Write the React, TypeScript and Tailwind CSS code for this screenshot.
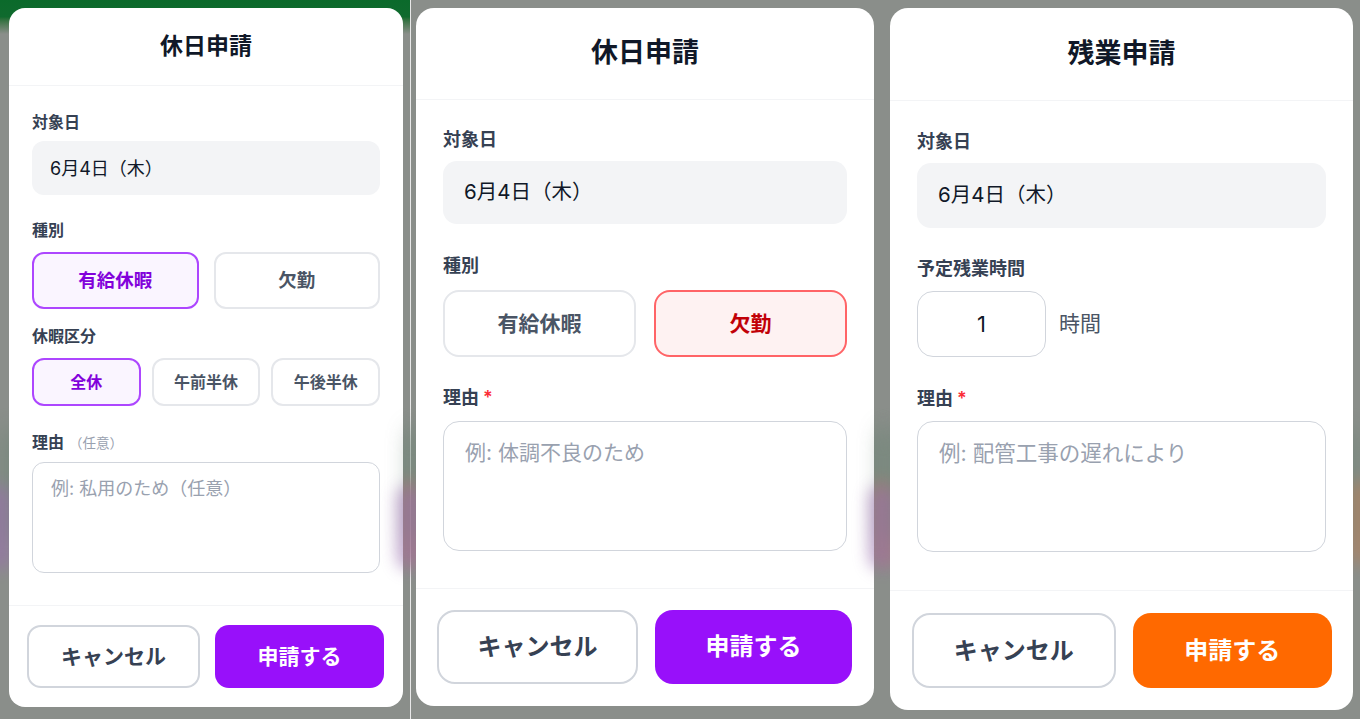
import type { ReactNode } from 'react'

const font = "font-['Inter','Noto_Sans_CJK_JP',sans-serif]"

function Backdrop({ green }: { green?: boolean }) {
  return (
    <>
      {green && (
        <div className="absolute inset-x-0 top-0 h-[34px] bg-gradient-to-b from-[#0b6a2b] via-[#0f6a2e] to-[#8a8e8a]" />
      )}
      <div className="absolute inset-x-0 top-[430px] h-[110px] bg-[#6f8677] blur-md opacity-60" />
      <div className="absolute left-[-14px] top-[485px] h-[85px] w-[26px] rounded-full bg-[#9a6fae] blur-sm opacity-60" />
      <div className="absolute right-[-14px] top-[480px] h-[85px] w-[26px] rounded-full bg-[#b8805a] blur-sm opacity-60" />
    </>
  )
}

function Label({ children, className }: { children: ReactNode; className: string }) {
  return <div className={`font-semibold text-gray-700 ${className}`}>{children}</div>
}

function Star() {
  return <span className="ml-[4px] text-red-500">*</span>
}

export default function App() {
  return (
    <div className={`flex h-[719px] w-[1360px] overflow-hidden bg-[#8a8e8a] ${font}`}>
      {/* panel 1: 休日申請 (有給休暇) */}
      <div className="relative w-[410px] shrink-0 pl-[9px] pr-[7px] pt-[8px]">
        <Backdrop green />
        <div className="relative rounded-[16px] bg-white">
          <div className="flex h-[78px] items-center justify-center border-b border-gray-100">
            <h2 className="text-[23px] font-bold text-gray-900">休日申請</h2>
          </div>
          <div className="px-[23px] pt-[26px] pb-[32px]">
            <Label className="mb-[9px] text-[16px] leading-[20px]">対象日</Label>
            <div className="flex h-[54px] items-center rounded-[12px] bg-gray-100 px-[18px] text-[18px] text-gray-900">
              6月4日（木）
            </div>
            <Label className="mt-[25px] mb-[12px] text-[16px] leading-[20px]">種別</Label>
            <div className="flex gap-[15px]">
              <button className="h-[57px] flex-1 rounded-[12px] border-2 border-purple-500 bg-purple-50 text-[18.5px] font-bold text-purple-700">
                有給休暇
              </button>
              <button className="h-[57px] flex-1 rounded-[12px] border-2 border-gray-200 bg-white text-[18.5px] font-bold text-gray-600">
                欠勤
              </button>
            </div>
            <Label className="mt-[17px] mb-[12px] text-[16px] leading-[20px]">休暇区分</Label>
            <div className="grid grid-cols-3 gap-[11px]">
              <button className="h-[48px] rounded-[12px] border-2 border-purple-500 bg-purple-50 text-[16px] font-bold text-purple-700">
                全休
              </button>
              <button className="h-[48px] rounded-[12px] border-2 border-gray-200 bg-white text-[16px] font-semibold text-gray-600">
                午前半休
              </button>
              <button className="h-[48px] rounded-[12px] border-2 border-gray-200 bg-white text-[16px] font-semibold text-gray-600">
                午後半休
              </button>
            </div>
            <Label className="mt-[26px] mb-[9px] flex items-baseline text-[16px] leading-[20px]">
              理由
              <span className="ml-[5px] text-[13.5px] font-normal text-gray-400">（任意）</span>
            </Label>
            <textarea
              placeholder="例: 私用のため（任意）"
              className="block h-[111px] w-full resize-none rounded-[12px] border border-gray-300 px-[18px] py-[14px] text-[18px] leading-[24px] outline-none placeholder:text-gray-400"
            />
          </div>
          <div className="flex gap-[15px] border-t border-gray-100 pt-[19px] pr-[19px] pb-[19px] pl-[18px]">
            <button className="h-[63px] flex-1 rounded-[14px] border-2 border-gray-300 bg-white text-[21px] font-bold text-gray-700">
              キャンセル
            </button>
            <button className="h-[63px] flex-1 rounded-[14px] bg-purple-600 text-[21px] font-bold text-white">
              申請する
            </button>
          </div>
        </div>
      </div>

      <div className="w-px shrink-0 bg-white/80" />

      {/* panel 2: 休日申請 (欠勤) */}
      <div className="relative w-[472px] shrink-0 pl-[5px] pr-[9px] pt-[8px]">
        <Backdrop />
        <div className="relative rounded-[18px] bg-white">
          <div className="flex h-[92px] items-center justify-center border-b border-gray-100">
            <h2 className="text-[27px] font-bold text-gray-900">休日申請</h2>
          </div>
          <div className="px-[27px] pt-[28px] pb-[37px]">
            <Label className="mb-[9px] text-[18px] leading-[24px]">対象日</Label>
            <div className="flex h-[63px] items-center rounded-[14px] bg-gray-100 px-[21px] text-[20.5px] text-gray-900">
              6月4日（木）
            </div>
            <Label className="mt-[30px] mb-[12px] text-[18px] leading-[24px]">種別</Label>
            <div className="flex gap-[18px]">
              <button className="h-[67px] flex-1 rounded-[16px] border-2 border-gray-200 bg-white text-[21px] font-bold text-gray-600">
                有給休暇
              </button>
              <button className="h-[67px] flex-1 rounded-[16px] border-2 border-red-400 bg-red-50 text-[21px] font-bold text-red-700">
                欠勤
              </button>
            </div>
            <Label className="mt-[29px] mb-[11px] text-[18px] leading-[24px]">
              理由
              <Star />
            </Label>
            <textarea
              placeholder="例: 体調不良のため"
              className="block h-[130px] w-full resize-none rounded-[16px] border border-gray-300 px-[21px] py-[17px] text-[21px] leading-[28px] outline-none placeholder:text-gray-400"
            />
          </div>
          <div className="flex gap-[17px] border-t border-gray-100 pt-[21px] pr-[22px] pb-[22px] pl-[21px]">
            <button className="h-[74px] flex-1 rounded-[18px] border-2 border-gray-300 bg-white text-[24px] font-bold text-gray-700">
              キャンセル
            </button>
            <button className="h-[74px] flex-1 rounded-[18px] bg-purple-600 text-[24px] font-bold text-white">
              申請する
            </button>
          </div>
        </div>
      </div>

      {/* panel 3: 残業申請 */}
      <div className="relative flex-1 px-[7px] pt-[8px]">
        <Backdrop />
        <div className="relative rounded-[18px] bg-white">
          <div className="flex h-[93px] items-center justify-center border-b border-gray-100">
            <h2 className="text-[27px] font-bold text-gray-900">残業申請</h2>
          </div>
          <div className="px-[27px] pt-[29px] pb-[38px]">
            <Label className="mb-[9px] text-[18px] leading-[24px]">対象日</Label>
            <div className="flex h-[65px] items-center rounded-[14px] bg-gray-100 px-[21px] text-[20.5px] text-gray-900">
              6月4日（木）
            </div>
            <Label className="mt-[29px] mb-[10px] text-[18px] leading-[24px]">予定残業時間</Label>
            <div className="flex items-center gap-[13px]">
              <div className="flex h-[66px] w-[129px] items-center justify-center rounded-[16px] border border-gray-300 text-[22px] text-gray-900">
                1
              </div>
              <span className="text-[21px] text-gray-600">時間</span>
            </div>
            <Label className="mt-[30px] mb-[10px] text-[18px] leading-[24px]">
              理由
              <Star />
            </Label>
            <textarea
              placeholder="例: 配管工事の遅れにより"
              className="block h-[131px] w-full resize-none rounded-[16px] border border-gray-300 px-[21px] py-[17px] text-[21.5px] leading-[28px] outline-none placeholder:text-gray-400"
            />
          </div>
          <div className="flex gap-[17px] border-t border-gray-100 pt-[22px] pr-[21px] pb-[22px] pl-[22px]">
            <button className="h-[75px] flex-1 rounded-[18px] border-2 border-gray-300 bg-white text-[24px] font-bold text-gray-700">
              キャンセル
            </button>
            <button className="h-[75px] flex-1 rounded-[18px] bg-orange-500 text-[24px] font-bold text-white">
              申請する
            </button>
          </div>
        </div>
      </div>
    </div>
  )
}
